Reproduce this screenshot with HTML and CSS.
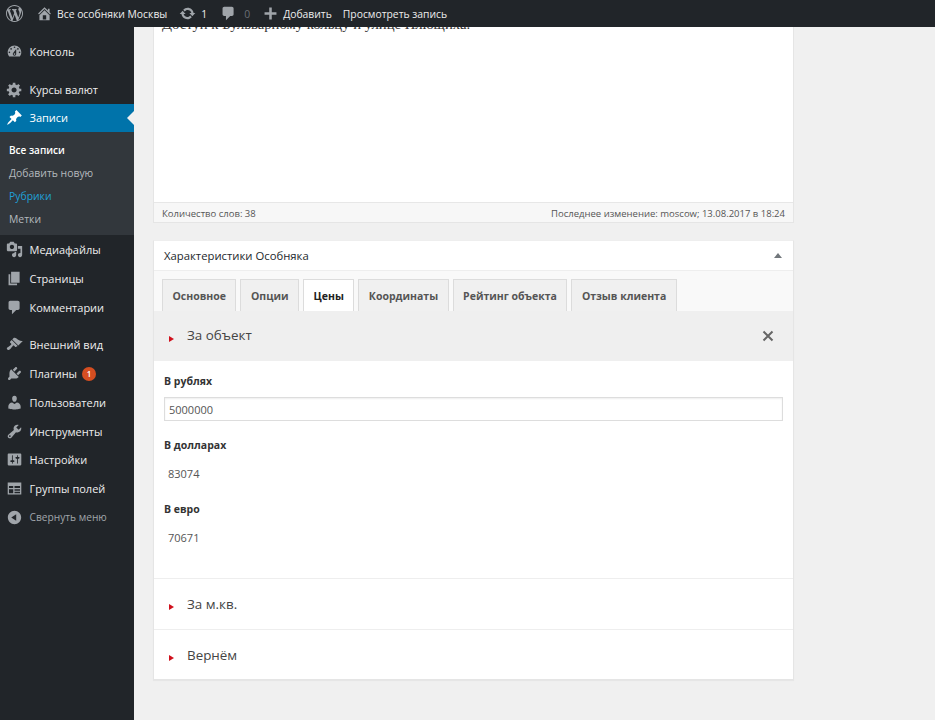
FILE: index.html
```html
<!DOCTYPE html>
<html lang="ru">
<head>
<meta charset="utf-8">
<title>Записи</title>
<link rel="stylesheet" href="styles.css">
</head>
<body>
<header class="adminbar">
  <svg class="logo" viewBox="0 0 20 20"><path d="M20 10c0-5.51-4.49-10-10-10C4.48 0 0 4.49 0 10c0 5.52 4.48 10 10 10 5.51 0 10-4.48 10-10zM7.78 15.37L4.37 6.22c.55-.02 1.17-.08 1.17-.08.5-.06.44-1.13-.06-1.11 0 0-1.45.11-2.37.11-.18 0-.37 0-.58-.01C4.12 2.69 6.87 1.11 10 1.11c2.33 0 4.45.87 6.05 2.34-.68-.11-1.65.39-1.65 1.58 0 .74.45 1.36.9 2.1.35.61.55 1.36.55 2.46 0 1.49-1.4 5-1.4 5l-3.03-8.37c.54-.02.82-.17.82-.17.5-.05.44-1.25-.06-1.22 0 0-1.44.12-2.38.12-.87 0-2.33-.12-2.33-.12-.5-.03-.56 1.2-.06 1.22l.92.08 1.26 3.41zM17.41 10c.24-.64.74-1.87.43-4.25.7 1.29 1.05 2.71 1.05 4.25 0 3.29-1.73 6.24-4.4 7.78.97-2.59 1.94-5.2 2.92-7.78zM6.1 18.09C3.12 16.65 1.11 13.53 1.11 10c0-1.3.23-2.48.72-3.59C3.25 10.3 4.67 14.2 6.1 18.09zm4.03-6.63l2.58 6.98c-.86.29-1.76.45-2.71.45-.79 0-1.57-.11-2.29-.33.81-2.38 1.62-4.74 2.42-7.1z"/></svg>
  <span class="bar-item site"><svg class="bar-icon" viewBox="0 0 20 20"><path d="M16 8.5l1.53 1.53-1.06 1.06L10 4.62l-6.47 6.47-1.06-1.06L10 2.5l4 4v-2h2v4zm-6-2.46l6 5.99V18H4v-5.97zM12 17v-5H8v5h4z"/></svg>Все особняки Москвы</span>
  <span class="bar-item updates"><svg class="bar-icon" viewBox="0 0 20 20"><path d="M10.2 3.28c3.53 0 6.43 2.61 6.92 6h2.08l-3.5 4-3.5-4h2.32c-.45-1.97-2.21-3.45-4.32-3.45-1.45 0-2.73.71-3.54 1.78L4.95 5.66C6.23 4.2 8.11 3.28 10.2 3.28zm-.4 13.44c-3.52 0-6.43-2.61-6.92-6H.8l3.5-4c1.17 1.33 2.33 2.67 3.5 4H5.48c.45 1.97 2.21 3.45 4.32 3.45 1.45 0 2.73-.71 3.54-1.78l1.71 1.95c-1.28 1.46-3.15 2.38-5.25 2.38z"/></svg>1</span>
  <span class="bar-item comments"><svg class="bar-icon" viewBox="0 0 20 20"><path d="M5 2h9c1.1 0 2 .9 2 2v7c0 1.1-.9 2-2 2h-2l-5 5v-5H5c-1.1 0-2-.9-2-2V4c0-1.1.9-2 2-2z"/></svg><span class="muted">0</span></span>
  <span class="bar-item add"><svg class="bar-icon" viewBox="0 0 20 20"><path d="M17 8.5v3h-5.500V17h-3v-5.500H3v-3h5.500V3h3v5.500z"/></svg>Добавить</span>
  <span class="bar-item view">Просмотреть запись</span>
</header>
<div class="shell">
  <nav class="sidebar">
    <a class="menu-item first"><svg class="menu-icon" viewBox="0 0 20 20"><path d="M3.76 16h12.48c1.1-1.37 1.76-3.11 1.76-5 0-4.42-3.58-8-8-8s-8 3.58-8 8c0 1.89.66 3.63 1.76 5zM10 4c.55 0 1 .45 1 1s-.45 1-1 1-1-.45-1-1 .45-1 1-1zM6 6c.55 0 1 .45 1 1s-.45 1-1 1-1-.45-1-1 .45-1 1-1zm8 0c.55 0 1 .45 1 1s-.45 1-1 1-1-.45-1-1 .45-1 1-1zm-5.370 5.550L12 7v6c0 1.100-.9 2-2 2s-2-.9-2-2c0-.57.24-1.080.63-1.450zM4 10c.55 0 1 .45 1 1s-.45 1-1 1-1-.45-1-1 .45-1 1-1zm12 0c.55 0 1 .45 1 1s-.45 1-1 1-1-.45-1-1 .45-1 1-1zm-5 3c0-.55-.45-1-1-1s-1 .45-1 1 .45 1 1 1 1-.45 1-1z"/></svg>Консоль</a>
    <a class="menu-item group"><svg class="menu-icon" viewBox="0 0 20 20"><path d="M18 12h-2.180c-.17.7-.44 1.350-.81 1.930l1.540 1.540-2.100 2.100-1.540-1.540c-.58.36-1.230.63-1.910.79V19H8v-2.180c-.68-.16-1.330-.43-1.910-.79l-1.540 1.540-2.120-2.120 1.540-1.540c-.36-.58-.63-1.230-.79-1.910H1V9.030h2.170c.16-.7.44-1.350.8-1.940L2.430 5.550l2.100-2.100 1.540 1.540c.58-.37 1.240-.64 1.930-.81V2h3v2.180c.68.16 1.330.43 1.910.79l1.540-1.540 2.120 2.120-1.540 1.540c.36.59.64 1.240.8 1.940H18V12zm-8.500 1.500c1.660 0 3-1.340 3-3s-1.340-3-3-3-3 1.340-3 3 1.340 3 3 3z"/></svg>Курсы валют</a>
    <a class="menu-item current"><svg class="menu-icon" viewBox="0 0 20 20"><path d="M10.440 3.020l1.820-1.820 6.360 6.350-1.830 1.820c-1.050-.68-2.480-.57-3.410.36l-.75.75c-.92.93-1.040 2.350-.35 3.410l-1.830 1.820-2.410-2.410-2.800 2.790c-.42.42-3.380 2.710-3.800 2.290s1.860-3.390 2.280-3.810l2.790-2.790L4.100 9.360l1.830-1.820c1.050.69 2.480.57 3.400-.36l.75-.75c.93-.92 1.050-2.350.36-3.410z"/></svg>Записи</a>
    <div class="submenu">
      <a class="sub-item active">Все записи</a>
      <a class="sub-item">Добавить новую</a>
      <a class="sub-item hover">Рубрики</a>
      <a class="sub-item">Метки</a>
    </div>
    <a class="menu-item"><svg class="menu-icon" viewBox="0 0 20 20"><path d="M13 11V4c0-.55-.45-1-1-1h-1.670L9 1H5L3.670 3H2c-.55 0-1 .45-1 1v7c0 .55.45 1 1 1h10c.55 0 1-.45 1-1zM7 4.500c1.380 0 2.500 1.120 2.500 2.500S8.380 9.500 7 9.500 4.500 8.380 4.500 7 5.620 4.500 7 4.500zM14 6h5v10.500c0 1.380-1.120 2.500-2.500 2.500S14 17.880 14 16.500s1.120-2.500 2.500-2.500c.17 0 .34.02.5.05V9h-3V6zm-4 8.050V13h2v3.500c0 1.380-1.120 2.500-2.500 2.500S7 17.880 7 16.500 8.120 14 9.500 14c.17 0 .34.02.5.05z"/></svg>Медиафайлы</a>
    <a class="menu-item"><svg class="menu-icon" viewBox="0 0 20 20"><path d="M6 15V2h10v13H6zm-1 1h8v2H3V5h2v11z"/></svg>Страницы</a>
    <a class="menu-item"><svg class="menu-icon" viewBox="0 0 20 20"><path d="M5 2h9c1.100 0 2 .9 2 2v7c0 1.100-.9 2-2 2h-2l-5 5v-5H5c-1.100 0-2-.9-2-2V4c0-1.100.9-2 2-2z"/></svg>Комментарии</a>
    <a class="menu-item group"><svg class="menu-icon" viewBox="0 0 20 20"><path d="M14.480 11.060L7.410 3.990l1.500-1.500c.5-.56 2.300-.47 3.510.32 1.210.8 1.430 1.280 2.910 2.100 1.180.64 2.450 1.260 4.450.85zm-.71.71L6.700 4.700 4.930 6.470c-.39.39-.39 1.020 0 1.410l1.060 1.060c.39.39.39 1.030 0 1.420-.6.6-1.430 1.110-2.210 1.690-.35.26-.7.53-1.010.84C1.430 13.230.91 14.440 1 15c.09.56.92 1.390 1.480 1.480.56.09 1.770-.43 3.140-1.800.31-.31.58-.66.84-1.010.58-.78 1.090-1.610 1.690-2.210.39-.39 1.030-.39 1.420 0l1.060 1.060c.39.39 1.020.39 1.410 0z"/></svg>Внешний вид</a>
    <a class="menu-item"><svg class="menu-icon" viewBox="0 0 20 20"><path d="M13.110 4.360L9.870 7.600 8 5.730l3.240-3.240c.35-.34 1.050-.2 1.560.32.52.51.66 1.210.31 1.550zm-8 1.770l.91-1.120 9.010 9.010-1.190.84c-.71.71-2.630 1.160-3.820 1.160H6.140L4.900 17.260c-.59.59-1.540.59-2.120 0-.59-.58-.59-1.530 0-2.120l1.240-1.240v-3.880c0-1.130.4-3.190 1.090-3.890zm7.260 3.970l3.240-3.240c.34-.35 1.040-.21 1.550.31.52.51.66 1.210.31 1.550l-3.240 3.250z"/></svg>Плагины<span class="badge">1</span></a>
    <a class="menu-item"><svg class="menu-icon" viewBox="0 0 20 20"><path d="M10 9.250c-2.270 0-2.730-3.440-2.730-3.440C7 4.020 7.820 2 9.970 2c2.160 0 2.980 2.020 2.710 3.810 0 0-.41 3.440-2.680 3.440zm0 2.570L12.720 10c2.390 0 4.520 2.330 4.520 4.530v2.490s-3.650 1.130-7.240 1.130c-3.650 0-7.240-1.130-7.240-1.130v-2.490c0-2.250 1.940-4.480 4.470-4.480z"/></svg>Пользователи</a>
    <a class="menu-item"><svg class="menu-icon" viewBox="0 0 20 20"><path d="M16.680 9.770c-1.340 1.340-3.300 1.670-4.950.99l-5.410 6.520c-.99.99-2.590.99-3.580 0s-.99-2.590 0-3.570l6.520-5.420c-.68-1.650-.35-3.610.99-4.950 1.280-1.280 3.120-1.620 4.720-1.060l-2.890 2.890 2.820 2.820 2.860-2.870c.53 1.580.18 3.390-1.080 4.650zM3.810 16.210c.4.39 1.040.39 1.430 0 .4-.4.4-1.040 0-1.430-.39-.4-1.030-.4-1.430 0-.39.39-.39 1.030 0 1.430z"/></svg>Инструменты</a>
    <a class="menu-item"><svg class="menu-icon" viewBox="0 0 20 20"><path d="M18 16V4c0-.55-.45-1-1-1H3c-.55 0-1 .45-1 1v12c0 .55.45 1 1 1h14c.55 0 1-.45 1-1zM8 11h1c.55 0 1 .45 1 1s-.45 1-1 1H8v1.500c0 .28-.22.5-.5.5s-.5-.22-.5-.5V13H6c-.55 0-1-.45-1-1s.45-1 1-1h1V5.500c0-.28.22-.5.5-.5s.5.22.5.5V11zm5-2h-1c-.55 0-1-.45-1-1s.45-1 1-1h1V5.500c0-.28.22-.5.5-.5s.5.22.5.5V7h1c.55 0 1 .45 1 1s-.45 1-1 1h-1v5.500c0 .28-.22.5-.5.5s-.5-.22-.5-.5V9z"/></svg>Настройки</a>
    <a class="menu-item"><svg class="menu-icon" viewBox="0 0 20 20"><path fill-rule="evenodd" d="M2 3h16v14H2zM3.500 7v2.500h5V7zm6.500 0v2.500h6.500V7zM3.500 11v4.500h5V11zm6.500 0v1.500h6.500V11zm0 2.800v1.700h6.500v-1.700z"/></svg>Группы полей</a>
    <a class="menu-item collapse"><svg class="menu-icon" viewBox="0 0 20 20"><path fill-rule="evenodd" d="M10 2.160c4.330 0 7.840 3.510 7.840 7.840s-3.510 7.840-7.840 7.840S2.160 14.330 2.160 10 5.710 2.160 10 2.160zm2 11.720V6.120L6.180 9.970z"/></svg>Свернуть меню</a>
  </nav>
  <main class="main">
    <section class="editor">
      <div class="editor-body">
        <p class="editor-text">Доступ к Бульварному кольцу и улице Плющиха.</p>
      </div>
      <div class="status">
        <span>Количество слов: 38</span>
        <span>Последнее изменение: moscow; 13.08.2017 в 18:24</span>
      </div>
    </section>
    <section class="metabox">
      <div class="metabox-head">
        <h2 class="metabox-title">Характеристики Особняка</h2>
        <span class="toggle"></span>
      </div>
      <div class="tabs">
        <span class="tab">Основное</span>
        <span class="tab">Опции</span>
        <span class="tab selected">Цены</span>
        <span class="tab">Координаты</span>
        <span class="tab">Рейтинг объекта</span>
        <span class="tab">Отзыв клиента</span>
      </div>
      <div class="acc-head open">
        <span class="arrow"></span>
        <span class="acc-title">За объект</span>
        <svg class="close" viewBox="0 0 12 12"><path d="M1.500 1.500l9 9m0-9l-9 9"/></svg>
      </div>
      <div class="acc-body">
        <div class="field">
          <div class="field-label">В рублях</div>
          <input class="field-input" type="text" value="5000000">
        </div>
        <div class="field">
          <div class="field-label">В долларах</div>
          <div class="field-value">83074</div>
        </div>
        <div class="field">
          <div class="field-label">В евро</div>
          <div class="field-value">70671</div>
        </div>
      </div>
      <div class="acc-head">
        <span class="arrow"></span>
        <span class="acc-title">За м.кв.</span>
      </div>
      <div class="acc-head last">
        <span class="arrow"></span>
        <span class="acc-title">Вернём</span>
      </div>
    </section>
  </main>
</div>
</body>
</html>
```
FILE: styles.css
```css
* { box-sizing: border-box; }
html, body { margin: 0; height: 720px; overflow: hidden; }
body {
  background: #f0f0f0;
  font-family: "Open Sans", "Noto Sans", sans-serif;
  font-size: 11px;
  color: #444;
  display: flex;
  flex-direction: column;
}
.adminbar {
  height: 27px;
  flex: none;
  background: #212529;
  color: #eee;
  font-size: 10.350px;
  display: flex;
  align-items: center;
  position: relative;
  z-index: 2;
  padding-left: 6px;
}
.logo { width: 17px; height: 17px; fill: #a0a5aa; flex: none; }
.bar-icon { width: 17px; height: 17px; fill: #a0a5aa; flex: none; }
.bar-item { display: flex; align-items: center; white-space: nowrap; }
.site { margin-left: 13px; margin-right: 12px; }
.site .bar-icon { margin-right: 4px; }
.updates { margin-right: 13px; }
.updates .bar-icon { margin-right: 5px; }
.comments { margin-right: 12px; }
.comments .bar-icon { margin-right: 7px; }
.muted { color: #6b7075; }
.add { margin-right: 11px; }
.add .bar-icon { margin-right: 4px; }
.shell { display: flex; flex: 1; min-height: 0; }
.sidebar {
  width: 134px;
  flex: none;
  background: #212529;
  padding-top: 10px;
}
.menu-item {
  display: flex;
  align-items: center;
  height: 28.750px;
  color: #eee;
  padding-left: 6px;
  white-space: nowrap;
}
.group { margin-top: 9px; }
.menu-icon { width: 17px; height: 17px; fill: #a0a5aa; flex: none; margin-right: 6.500px; }
.current { background: #0073aa; color: #fff; position: relative; }
.current .menu-icon { fill: #fff; }
.current::after {
  content: "";
  position: absolute;
  right: 0;
  top: 50%;
  margin-top: -7px;
  border: 7px solid transparent;
  border-right-color: #f0f0f0;
  border-left-width: 0;
}
.submenu {
  background: #32373c;
  padding-top: 7px;
  height: 103px;
}
.sub-item {
  display: block;
  height: 22.800px;
  line-height: 22.800px;
  padding-left: 9px;
  color: #b4b9be;
  font-size: 10.400px;
}
.sub-item.active { color: #fff; font-weight: 600; font-size: 10px; }
.sub-item.hover { color: #1fa0d8; }
.collapse { color: #a0a5aa; font-size: 10.200px; }
.badge {
  width: 14px;
  height: 14px;
  border-radius: 50%;
  background: #d54e21;
  color: #fff;
  font-size: 8px;
  font-weight: 600;
  line-height: 14px;
  text-align: center;
  margin-left: 5px;
}
.main { flex: 1; min-width: 0; padding-left: 19px; }
.editor {
  width: 641px;
  background: #fff;
  border: 1px solid #e5e5e5;
  border-top: 0;
}
.editor-body { height: 175px; overflow: hidden; }
.editor-text {
  margin: -13.500px 0 0 8px;
  font-family: "Liberation Serif", serif;
  font-size: 14.700px;
  line-height: 20px;
  color: #333;
}
.status {
  height: 20px;
  background: #f7f7f7;
  border-top: 1px solid #e7e7e7;
  padding: 1px 8px 0;
  display: flex;
  justify-content: space-between;
  align-items: center;
  font-size: 9.500px;
  color: #555;
}
.metabox {
  width: 641px;
  margin-top: 17px;
  background: #fff;
  border: 1px solid #e5e5e5;
  border-top-color: #eee;
  box-shadow: 0 1px 1px rgba(0, 0, 0, .04);
}
.metabox-head {
  height: 30px;
  display: flex;
  align-items: center;
  justify-content: space-between;
  border-bottom: 1px solid #eee;
  padding: 0 11px 0 10px;
}
.metabox-title { margin: 0; font-size: 11.300px; font-weight: 400; color: #23282d; }
.toggle {
  width: 0;
  height: 0;
  border: 4px solid transparent;
  border-top-width: 0;
  border-bottom: 5px solid #72777c;
}
.tabs {
  height: 40px;
  background: #f9f9f9;
  display: flex;
  align-items: flex-end;
  gap: 4px;
  padding-left: 8px;
}
.tab {
  height: 32px;
  line-height: 32px;
  padding: 0 9.500px;
  background: #f0f0f0;
  border: 1px solid #dcdcdc;
  border-bottom: 0;
  font-size: 10.500px;
  font-weight: 700;
  color: #555;
  white-space: nowrap;
}
.tab.selected { background: #fff; color: #222; }
.acc-head {
  height: 51px;
  display: flex;
  align-items: center;
  padding-left: 15px;
  border-bottom: 1px solid #eee;
  background: #fff;
}
.acc-head.open { height: 50px; background: #efefef; border-bottom: 0; }
.acc-head.last { height: 49px; border-bottom: 0; }
.arrow {
  width: 0;
  height: 0;
  border-left: 5px solid #d0101c;
  border-top: 3px solid transparent;
  border-bottom: 3px solid transparent;
  margin-top: 6px;
}
.acc-title { margin-left: 13px; font-size: 13.400px; color: #444; }
.open .acc-title { margin-top: -2px; }
.close { width: 12px; height: 12px; margin-left: auto; margin-right: 19px; stroke: #666; stroke-width: 2; fill: none; }
.acc-body { height: 218px; border-bottom: 1px solid #eee; padding: 12px 10px 0; }
.field { height: 64px; }
.field-label { height: 16px; line-height: 16px; font-size: 10.500px; font-weight: 700; color: #333; }
.field-input {
  display: block;
  width: 100%;
  height: 24px;
  margin-top: 8px;
  padding: 1px 4px 0;
  border: 1px solid #ddd;
  box-shadow: inset 0 1px 2px rgba(0, 0, 0, .07);
  font: 11px "Open Sans", sans-serif;
  color: #555;
  background: #fff;
}
.field-value { margin-top: 13px; padding-left: 4px; line-height: 16px; color: #555; }
```
